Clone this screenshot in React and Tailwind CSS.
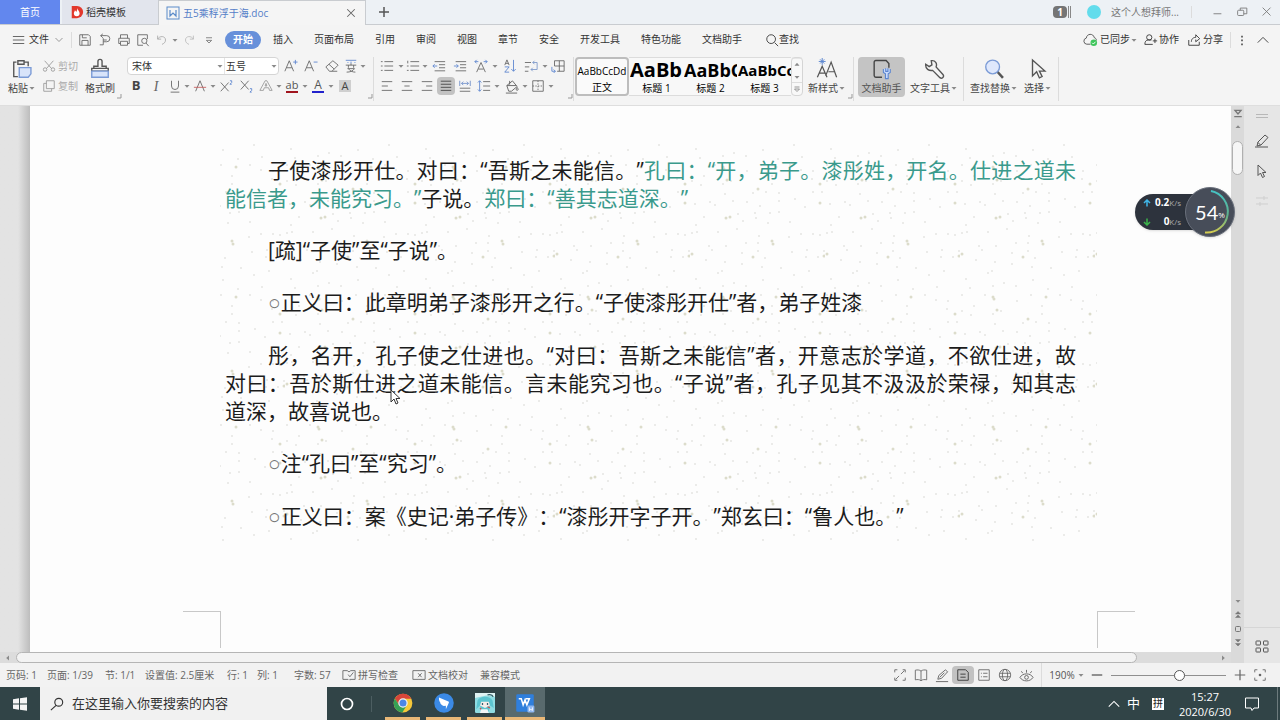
import React from "react";

const svgProps = { fill: "none", stroke: "currentColor", strokeWidth: 1 };

const Icon = ({ size = 16, className = "", children }) => (
  <svg
    width={size}
    height={size}
    viewBox="0 0 16 16"
    className={`shrink-0 ${className}`}
    aria-hidden="true"
    {...svgProps}
  >
    {children}
  </svg>
);

const Caret = () => (
  <svg width="8" height="8" viewBox="0 0 8 8" className="shrink-0" aria-hidden="true">
    <path d="M1.5 3h5L4 5.8z" fill="#8a8a8a" />
  </svg>
);

const Corner = () => (
  <svg width="6" height="6" viewBox="0 0 6 6" className="shrink-0 self-end" aria-hidden="true">
    <path d="M5 1v4H1" fill="none" stroke="#999" />
  </svg>
);

const Divider = ({ className = "h-4" }) => <span className={`w-px shrink-0 bg-[#dcdcdc] ${className}`} />;

const Tool = ({ label, width = "w-5", caret, active, children }) => (
  <button aria-label={label} className="flex h-[18px] items-center text-[#666]">
    <span
      className={`flex h-[18px] items-center justify-center ${width} ${active ? "rounded-sm bg-[#c2c2c2]" : ""}`}
    >
      {children}
    </span>
    {caret && <Caret />}
  </button>
);

const BigTool = ({ label, caret, width, active, children }) => (
  <button
    className={`flex h-10 flex-col items-center justify-between rounded-sm pt-px pb-px ${width} ${
      active ? "bg-[#c4c4c4] text-[#555]" : ""
    }`}
  >
    {children}
    <span className="flex items-center whitespace-nowrap leading-4">
      {label}
      {caret && <Caret />}
    </span>
  </button>
);

const TitleBar = () => (
  <header className="flex h-[25px] border-b border-[#c9ccd0] bg-[#edf1f5]">
    <button className="h-6 w-[60px] bg-[#6287ee] text-white">首页</button>
    <button className="ml-0.5 flex h-6 w-24 items-center bg-[#e2e5ed] pl-2 text-[#333]">
      <Icon size={14} className="mr-0.5">
        <path d="M2 1h6a7 7 0 0 1 0 14H2z" fill="#e2382c" stroke="none" />
        <path d="M8 3c0 2 3 3.500 3 6.500a3.300 3.300 0 0 1-6.600 0C4.400 8 5.500 7.500 5.600 6c1 .6 1.300 1.400 1.300 2C8 7 8.400 5 8 3z" fill="#fff" stroke="none" />
      </Icon>
      稻壳模板
    </button>
    <div className="flex h-[25px] w-[208px] items-center border-x border-t border-[#c9ccd0] bg-[#f5f5f5] pr-2 pl-1.5 text-[#5580c8]">
      <Icon size={16} className="mr-0.5 text-[#5b8bc9]">
        <rect x="2" y="2" width="12" height="12" />
        <path d="M5 5v6l3-3 3 3V5" strokeWidth="1.200" />
      </Icon>
      <span className="flex-1 whitespace-nowrap">五5乘稃浮于海.doc</span>
      <button aria-label="关闭标签" className="text-[#666]">
        <Icon size={12}>
          <path d="M3 3l10 10M13 3L3 13" strokeWidth="1.400" />
        </Icon>
      </button>
    </div>
    <button aria-label="新建" className="ml-2.5 text-[#555]">
      <Icon size={16}>
        <path d="M8 3v10M3 8h10" strokeWidth="1.500" />
      </Icon>
    </button>
    <div className="ml-auto flex items-center pr-1.5 text-[#777]">
      <span className="flex h-3 w-3.5 items-center justify-center rounded-sm bg-[#757575] font-bold text-white">1</span>
      <span className="ml-px h-3 w-[3px] border-x border-[#888]" />
      <span className="ml-4 h-3.5 w-3.5 rounded-full bg-[#62dcec]" />
      <span className="ml-2.5 w-[80px] whitespace-nowrap">这个人想拜师...</span>
      <Divider className="h-3" />
      <button aria-label="最小化" className="ml-[18px]">
        <Icon size={14}>
          <path d="M4 10h9" />
        </Icon>
      </button>
      <button aria-label="还原" className="ml-[11px]">
        <Icon size={14}>
          <rect x="3" y="6" width="7" height="6" rx="1" />
          <path d="M6 6V3.500h7.500V10H10" />
        </Icon>
      </button>
      <button aria-label="关闭" className="ml-[11px]">
        <Icon size={14}>
          <path d="M3 3l9 9M12 3l-9 9" />
        </Icon>
      </button>
    </div>
  </header>
);

const menus = ["插入", "页面布局", "引用", "审阅", "视图", "章节", "安全", "开发工具", "特色功能", "文档助手"];

const MenuBar = () => (
  <nav className="flex h-[29px] items-center pr-2.5 pl-3 text-[#333]">
    <button className="flex w-[59px] items-center">
      <Icon size={14} className="mr-[3px]">
        <path d="M1 4h13M1 8h13M1 12h13" stroke="#555" />
      </Icon>
      文件
      <Icon size={8} className="ml-1.5 text-[#999]">
        <path d="M1 4l7 7 7-7" strokeWidth="2" />
      </Icon>
    </button>
    <Divider />
    <div className="flex w-[153px] items-center pl-[3px] text-[#555]">
      <Tool label="保存">
        <Icon size={14}>
          <path d="M2 14V2h10l2 2v10zM4.500 14V8.500h7V14M5 2v3.500h5" />
        </Icon>
      </Tool>
      <Tool label="输出">
        <Icon size={14}>
          <path d="M3 3h7a3.500 3.500 0 0 1 0 7H6M5.500 1L3 3l2.500 2.500M6 6v7.500H2M6 8h4" />
        </Icon>
      </Tool>
      <Tool label="打印" width="w-[18px]">
        <Icon size={14}>
          <path d="M4 6V2h8v4M4 12H2V6h12v6h-2M4 9.500h8V14H4z" />
        </Icon>
      </Tool>
      <Tool label="打印预览">
        <Icon size={14}>
          <path d="M8 14H2V2h11v5" />
          <circle cx="9.500" cy="9" r="3" />
          <path d="M11.500 11.500L14.500 15" />
        </Icon>
      </Tool>
      <Tool label="撤销" width="w-[18px]" caret>
        <Icon size={14} className="text-[#aaa]">
          <path d="M3 3v4h4M3 7c2-4 9-4 9 1 0 3-2 4-4 5" />
        </Icon>
      </Tool>
      <Tool label="恢复">
        <Icon size={14} className="text-[#bbb]">
          <path d="M13 3v4H9M13 7C11 3 4 3 4 8c0 3 2 4 4 5" />
        </Icon>
      </Tool>
      <Tool label="自定义">
        <Icon size={12}>
          <path d="M4 5h8M4.500 8.500h7L8 12z" />
        </Icon>
      </Tool>
    </div>
    <button className="h-[18px] w-9 rounded-full bg-[#6790da] font-bold text-white">开始</button>
    <div className="ml-3 flex items-center gap-[21px] whitespace-nowrap">
      {menus.map((m) => (
        <button key={m}>{m}</button>
      ))}
      <button className="ml-0.5 flex items-center">
        <Icon size={14}>
          <circle cx="7" cy="7" r="5" />
          <path d="M11 11l4 4" />
        </Icon>
        查找
      </button>
    </div>
    <div className="ml-auto flex items-center whitespace-nowrap">
      <button className="flex items-center">
        <Icon size={15} className="mr-0.5 text-[#555]">
          <path d="M8 13H4a3.300 3.300 0 0 1-.5-6.500C4 1.500 11 1 12 6c1.500.5 2.300 1.500 2.300 3" />
          <circle cx="11.500" cy="11.500" r="3.500" fill="#3fc55c" stroke="none" />
          <path d="M9.800 11.500l1.300 1.300 2.200-2.400" stroke="#fff" />
        </Icon>
        已同步
        <Caret />
      </button>
      <button className="ml-1.5 flex items-center">
        <Icon size={14} className="mr-px">
          <circle cx="6" cy="5" r="3" />
          <path d="M8.500 8H5c-3 0-4 2-4 5h9M10 9h5M12.500 6.500v5" />
        </Icon>
        协作
      </button>
      <button className="ml-2 flex items-center">
        <Icon size={14} className="mr-0.5">
          <path d="M2 8v6h12v-4M5 10c0-4 3-5 5-5V2l4.500 4.500L10 10V7.500" />
        </Icon>
        分享
      </button>
      <Divider className="ml-[7px] h-4" />
      <button aria-label="更多" className="ml-1">
        <Icon size={14}>
          <path d="M8 3v2M8 7.500v2M8 12v2" strokeWidth="1.600" />
        </Icon>
      </button>
      <button aria-label="收起功能区" className="ml-[7px]">
        <Icon size={14}>
          <path d="M2 11l6-6 6 6" />
        </Icon>
      </button>
    </div>
  </nav>
);

const ClipboardGroup = () => (
  <div className="flex">
    <BigTool label="粘贴" caret width="w-7">
      <Icon size={22} className="text-[#555]">
        <path d="M4 3H2v10.500h3M10 3h2.500v3M5 2h4.500v2.500H5z" />
        <path d="M6 7h8.500v4.500l-2 2.500H6z" fill="#d8e4fa" stroke="#7b9bd6" />
      </Icon>
    </BigTool>
    <div className="ml-1.5 flex flex-col gap-0.5 text-[#aaa]">
      <button className="flex h-[18px] items-center">
        <Icon size={14} className="mr-0.5 text-[#999]">
          <path d="M3 2l8 9M13 2L5 11" />
          <circle cx="3.500" cy="12" r="2" />
          <circle cx="12.500" cy="12" r="2" />
        </Icon>
        剪切
      </button>
      <button className="flex h-[18px] items-center">
        <Icon size={14} className="mr-0.5 text-[#999]">
          <path d="M5 2h9v9H5zM5 5H2v9h9v-3" />
        </Icon>
        复制
      </button>
    </div>
    <BigTool label="格式刷" width="ml-1.5 w-8">
      <Icon size={22} className="text-[#555]">
        <path d="M2 7.500h12v2H2zM3.500 7V6h3V2.500a1.500 1.500 0 0 1 3 0V6h3v1.500" />
        <path d="M2 9.500h12V14H2z" fill="#d8e4fa" stroke="#7b9bd6" />
      </Icon>
    </BigTool>
    <Corner />
  </div>
);

const FontGroup = () => (
  <div className="ml-[5px] flex">
    <div className="flex flex-col gap-0.5">
      <div className="flex">
        <div className="flex h-[18px] w-[152px] rounded-sm border border-[#d5d5d5] bg-white">
          <div className="relative flex w-24 items-center">
            <select aria-label="字体" className="w-full appearance-none pl-1 text-[#333] outline-none">
              <option>宋体</option>
            </select>
            <span className="pointer-events-none absolute right-0">
              <Caret />
            </span>
          </div>
          <div className="relative flex flex-1 items-center border-l border-[#e5e5e5]">
            <select aria-label="字号" className="w-full appearance-none pl-px text-[#333] outline-none">
              <option>五号</option>
            </select>
            <span className="pointer-events-none absolute right-0">
              <Caret />
            </span>
          </div>
        </div>
        <div className="flex pl-0.5">
          <Tool label="增大字号">
            <Icon size={14}>
              <path d="M1 14L6 2l5 12M3 10h6" />
              <path d="M13 1v5M10.500 3.500h5" stroke="#5b85cf" />
            </Icon>
          </Tool>
          <Tool label="减小字号">
            <Icon size={14}>
              <path d="M1 14L6 2l5 12M3 10h6" />
              <path d="M11 3.500h4.500" stroke="#5b85cf" />
            </Icon>
          </Tool>
          <Tool label="清除格式" width="w-[22px]">
            <Icon size={14}>
              <path d="M1 9l8-7 6 5-7 7H5zM4.500 6l6 5.500M8 14h6" />
            </Icon>
          </Tool>
          <Tool label="拼音指南" width="w-4" caret>
            <Icon size={14}>
              <path d="M2 1.500h12M4 4h1M8 3v2M12 4h1" stroke="#5b85cf" />
              <path d="M2 7h12M8 5v2M5 7v3M11 7v3M4 11h8c-2 3-5 4-9 4M5 11c2 3 5 4 8 4" />
            </Icon>
          </Tool>
        </div>
      </div>
      <div className="flex">
        <Tool label="加粗" width="w-[18px]">
          <span className="text-[13px] font-bold text-[#444]">B</span>
        </Tool>
        <Tool label="倾斜" width="w-[22px]">
          <span className="font-['Liberation_Serif',serif] text-[14px] italic">I</span>
        </Tool>
        <Tool label="下划线" width="w-4" caret>
          <Icon size={14}>
            <path d="M4 2v6a4 4 0 0 0 8 0V2M3 15h10" />
          </Icon>
        </Tool>
        <Tool label="删除线" width="w-[18px]" caret>
          <Icon size={14}>
            <path d="M3 14L8 2l5 12" />
            <path d="M1 9.500h14" stroke="#c76060" />
          </Icon>
        </Tool>
        <Tool label="上标" width="w-[18px]">
          <Icon size={14}>
            <path d="M2 4l9 10M11 4L2 14" />
            <path d="M12.500 2h2v2l-2 2h2" stroke="#5b85cf" />
          </Icon>
        </Tool>
        <Tool label="下标" width="w-[22px]">
          <Icon size={14}>
            <path d="M2 2l9 10M11 2L2 12" />
            <path d="M12.500 11h2v2l-2 2h2" stroke="#5b85cf" />
          </Icon>
        </Tool>
        <Tool label="文字效果" width="w-[18px]" caret>
          <Icon size={14} className="text-[#999]">
            <path d="M1 13L7 2h2l6 11h-3l-1-3H6l-1 3zM7 8l1-3 1 3z" />
          </Icon>
        </Tool>
        <Tool label="突出显示" width="w-[18px]" caret>
          <span className="border-b-2 border-[#a0141e] text-[11px] leading-3 text-[#555]">ab</span>
        </Tool>
        <Tool label="字体颜色" width="w-[18px]" caret>
          <span className="w-3 border-b-2 border-[#2222cc] text-center text-[12px] leading-3 text-[#555]">A</span>
        </Tool>
        <Tool label="字符底纹">
          <span className="h-3 w-3 bg-[#cfcfcf] text-center text-[11px] leading-3 text-[#444]">A</span>
        </Tool>
      </div>
    </div>
    <Corner />
  </div>
);

const ParagraphGroup = () => (
  <div className="ml-[3px] flex">
    <div className="flex flex-col gap-0.5">
      <div className="flex">
        <Tool label="项目符号" caret>
          <Icon size={14}>
            <path d="M5 3h10M5 8h10M5 13h10M1 3h2M1 8h2M1 13h2" />
          </Icon>
        </Tool>
        <Tool label="编号" width="w-4" caret>
          <Icon size={14}>
            <path d="M5 3h10M5 8h10M5 13h10M2 2v3M1 8h2M1 13h2" />
          </Icon>
        </Tool>
        <Tool label="减少缩进量">
          <Icon size={14}>
            <path d="M3 3h12M8 6.500h7M8 10h7M3 13.500h12" />
            <path d="M6 8H1M3 6L1 8l2 2" stroke="#5b85cf" />
          </Icon>
        </Tool>
        <Tool label="增加缩进量" width="w-[22px]">
          <Icon size={14}>
            <path d="M3 3h12M8 6.500h7M8 10h7M3 13.500h12" />
            <path d="M1 8h5M4 6l2 2-2 2" stroke="#5b85cf" />
          </Icon>
        </Tool>
        <Tool label="中文版式" caret>
          <Icon size={14}>
            <path d="M3 15L8 4l5 11M5 11.500h6" />
            <path d="M5 3H1M3 1L1 3l2 2M11 3h4M13 1l2 2-2 2" stroke="#5b85cf" />
          </Icon>
        </Tool>
        <Tool label="排序" width="w-[22px]">
          <Icon size={14}>
            <path d="M2 7l2.500-6L7 7M3 5h3" />
            <path d="M2 9h5l-5 6h5M12 1v13M9.500 11.500L12 14l2.500-2.500" stroke="#5b85cf" />
          </Icon>
        </Tool>
        <Tool label="显示段落标记" caret>
          <Icon size={14}>
            <path d="M1 4h7M1 9h5M1 14h4" />
            <path d="M10 4h5v8H8M10 10l-2 2 2 2M12 2l-2 2 2 2" stroke="#7d98c9" />
          </Icon>
        </Tool>
        <Tool label="插入表格" width="w-[18px]">
          <Icon size={14}>
            <path d="M4 2h11v12H7M4 2v6M9.500 2v12M4 8h11" />
            <path d="M1 9v5h4M3 12l2 2-2 2" stroke="#5b85cf" />
          </Icon>
        </Tool>
      </div>
      <div className="flex">
        <Tool label="左对齐">
          <Icon size={14}>
            <path d="M2 3h12M2 8h7M2 13h12" />
          </Icon>
        </Tool>
        <Tool label="居中">
          <Icon size={14}>
            <path d="M2 3h12M5 8h6M2 13h12" />
          </Icon>
        </Tool>
        <Tool label="右对齐">
          <Icon size={14}>
            <path d="M2 3h12M7 8h7M2 13h12" />
          </Icon>
        </Tool>
        <Tool label="两端对齐" width="w-[18px]" active>
          <Icon size={14} className="text-[#444]">
            <path d="M2 2.500h12M2 6h12M2 9.500h12M2 13h12" />
          </Icon>
        </Tool>
        <Tool label="分散对齐">
          <Icon size={14}>
            <path d="M2 10.500h12M2 14h12" />
            <path d="M2 2v6M14 2v6M4 5h8M6 3L4 5l2 2M10 3l2 2-2 2" stroke="#6f8fc9" />
          </Icon>
        </Tool>
        <Tool label="行距" width="w-[18px]" caret>
          <Icon size={14}>
            <path d="M7 3h8M7 8h8M7 13h8" />
            <path d="M3 2v12M1 4l2-2 2 2M1 12l2 2 2-2" stroke="#5b85cf" />
          </Icon>
        </Tool>
        <Tool label="底纹颜色" caret>
          <Icon size={15}>
            <path d="M3 7l6-5 5 6-6 5H5zM3 7h10M6 2v4M14 9c1.500 2 1.500 3 0 3s-1-1 0-3M2 15h12" />
          </Icon>
        </Tool>
        <Tool label="边框" width="w-[18px]" caret>
          <Icon size={14}>
            <path d="M2 2h12v12H2z" />
            <path d="M8 2v12M2 8h12" strokeDasharray="1.500 1.500" />
          </Icon>
        </Tool>
      </div>
    </div>
    <Corner />
  </div>
);

const styles = [
  { name: "标题 1", sample: "AaBb", size: "text-[20px]" },
  { name: "标题 2", sample: "AaBbC", size: "text-[18px]" },
  { name: "标题 3", sample: "AaBbCc", size: "text-[15px]" },
];

const StyleGallery = () => (
  <div className="flex h-[39px] text-black">
    <button className="flex w-[54px] flex-col items-center overflow-hidden rounded-sm border-2 border-[#bdbdbd] bg-[#fafafa]">
      <span className="h-[22px] text-[10px] leading-6">AaBbCcDd</span>
      <span className="leading-3">正文</span>
    </button>
    <div className="flex border-y border-[#dcdcdc] bg-[#f8f8f8]">
      {styles.map((s) => (
        <button key={s.name} className="ml-px flex w-[53px] flex-col items-center overflow-hidden">
          <span className={`h-6 w-full overflow-hidden text-left font-bold leading-6 whitespace-nowrap ${s.size}`}>
            {s.sample}
          </span>
          <span className="leading-3">{s.name}</span>
        </button>
      ))}
    </div>
    <div className="flex w-3 flex-col divide-y divide-[#ddd] rounded-sm border border-[#d5d5d5] bg-[#f8f8f8]">
      <button aria-label="上一行" className="flex flex-1 rotate-180 items-center justify-center">
        <Caret />
      </button>
      <button aria-label="下一行" className="flex flex-1 items-center justify-center">
        <Caret />
      </button>
      <button aria-label="更多样式" className="flex flex-1 items-center justify-center">
        <Icon size={8} className="text-[#777]">
          <path d="M3 4h10M3 8h10l-5 5z" strokeWidth="1.500" />
        </Icon>
      </button>
    </div>
  </div>
);

const Ribbon = () => (
  <div className="flex h-[52px] border-b border-[#dedede] pt-[3px] pb-1.5 pl-2 text-[#444]">
    <ClipboardGroup />
    <FontGroup />
    <Divider className="h-11" />
    <ParagraphGroup />
    <Divider className="mr-px h-11" />
    <StyleGallery />
    <div className="ml-1 flex">
      <BigTool label="新样式" caret width="w-10">
        <Icon size={22} className="text-[#555]">
          <path d="M1 14l3.500-8L8 14M2.500 11h4M7 13l4-10 4 11M9 10h5" strokeWidth="0.900" />
          <path d="M4.500 0v5M2 2.500h5M3 1l3 3M6 1L3 4" stroke="#5b85cf" strokeWidth="0.700" />
        </Icon>
      </BigTool>
      <Corner />
    </div>
    <Divider className="h-11" />
    <BigTool label="文档助手" active width="ml-1 w-[47px]">
      <Icon size={22} className="text-[#444]">
        <path d="M8 14H3.500a1.200 1.200 0 0 1-1.200-1.200V3a1.200 1.200 0 0 1 1.200-1.200H11L13 4v3" />
        <path d="M9 8v2.500l1.500 1V15h2v-3.500l1.500-1V8M10.700 7.500v2.200h1.600V7.500" fill="#c9dafb" stroke="#5b85cf" strokeWidth="0.800" />
      </Icon>
    </BigTool>
    <BigTool label="文字工具" caret width="ml-1 w-[50px]">
      <Icon size={22} className="text-[#555]">
        <path d="M2 4.500l2.500 1.800L6.500 5 6 2c3-.5 4.500 2 3.500 4.500l5 5.500a1.600 1.600 0 0 1-2.200 2.300L7 9C4.500 9.500 1.500 8 2 4.500z" />
      </Icon>
    </BigTool>
    <Divider className="ml-1 h-11" />
    <BigTool label="查找替换" caret width="ml-1 w-[52px]">
      <Icon size={22} className="text-[#555]">
        <path d="M10.500 10l4 4.500" strokeWidth="1.800" />
        <circle cx="7" cy="6.500" r="5" fill="#dfe8fc" stroke="#7b9bd6" />
      </Icon>
    </BigTool>
    <BigTool label="选择" caret width="ml-0.5 w-8">
      <Icon size={22} className="text-[#555]">
        <path d="M4 1.500v11.500l3-3 2 4.500 2-1-2-4h4z" />
      </Icon>
    </BigTool>
    <Divider className="ml-1 h-11" />
  </div>
);

/* one tile of the rice-paper speckle, [x, y] */
const specks = [
  [65, 3], [80, 3], [89, 2], [100, 12], [78, 13], [66, 8], [53, 11], [48, 4], [6, 15], [14, 7], [2, 23], [7, 22],
  [28, 22], [47, 19], [69, 26], [68, 33], [56, 33], [36, 36], [22, 40], [19, 36], [16, 50], [35, 52], [52, 43],
  [52, 54], [68, 41], [75, 48], [72, 57], [91, 58], [102, 42], [99, 27], [111, 24], [123, 24], [130, 25], [117, 40],
  [116, 47], [128, 47], [134, 41], [119, 61], [104, 65], [112, 77], [88, 79], [73, 70], [56, 76], [44, 73], [33, 76],
  [32, 61], [28, 63], [10, 78], [6, 69], [2, 85], [25, 85], [57, 91], [71, 85], [100, 85], [111, 90], [122, 99],
  [123, 91], [82, 96], [82, 104], [76, 112], [63, 113], [41, 101], [33, 104], [14, 96], [11, 105], [2, 101],
  [35, 114], [43, 121], [57, 122], [20, 122], [25, 125], [5, 124], [89, 113], [89, 121], [105, 119], [123, 112],
  [132, 112], [115, 127], [70, 126],
];
const darkSpecks = [
  [36, 8], [40, 7], [82, 31], [83, 34], [63, 47], [2, 44], [134, 46], [33, 87], [34, 89], [86, 87], [68, 109],
  [130, 104], [37, 100], [130, 123],
];

const Speckle = () => (
  <svg className="absolute inset-0 h-full w-full" aria-hidden="true">
    <defs>
      <pattern id="speckle" width="135" height="130" patternUnits="userSpaceOnUse" patternTransform="translate(65 66)">
        {specks.map(([x, y]) => (
          <circle key={`${x}-${y}`} cx={x} cy={y} r="1" fill="#e6e6e3" />
        ))}
        {darkSpecks.map(([x, y]) => (
          <circle key={`${x}-${y}`} cx={x} cy={y} r="1.5" fill="#dcdccb" />
        ))}
      </pattern>
    </defs>
    <rect width="100%" height="100%" fill="url(#speckle)" />
  </svg>
);

const Note = ({ children }) => <span className="text-[#3a9a8c]">{children}</span>;
const Ring = () => <span className="font-['Liberation_Sans',sans-serif] text-[#777]">○</span>;

const Page = () => (
  <main className="flex flex-1 flex-col bg-[#fdfdfd] pt-[38px] pl-[190px]">
    <article className="relative max-w-[877px] pt-3 pb-2.5 pl-[5px] text-[21px] leading-7 text-[#1c1c1c] [text-spacing-trim:space-all]">
      <Speckle />
      <div className="relative flex max-w-[851px] flex-col gap-6 text-justify indent-[43px]">
        <p>
          子使漆彤开仕。对曰：“吾斯之未能信。”
          <Note>孔曰：“开，弟子。漆彤姓，开名。仕进之道未能信者，未能究习。”</Note>
          子说。<Note>郑曰：“善其志道深。”</Note>
        </p>
        <p>[疏]“子使”至“子说”。</p>
        <p>
          <Ring />
          正义曰：此章明弟子漆彤开之行。“子使漆彤开仕”者，弟子姓漆
        </p>
        <p>
          彤，名开，孔子使之仕进也。“对曰：吾斯之未能信”者，开意志於学道，不欲仕进，故对曰：吾於斯仕进之道未能信。言未能究习也。“子说”者，孔子见其不汲汲於荣禄，知其志道深，故喜说也。
        </p>
        <p>
          <Ring />
          注“孔曰”至“究习”。
        </p>
        <p>
          <Ring />
          正义曰：案《史记·弟子传》：“漆彤开字子开。”郑玄曰：“鲁人也。”
        </p>
      </div>
    </article>
    {/* page margin marks */}
    <div className="mt-auto mb-1 -ml-[37px] flex h-[37px]">
      <span className="w-[38px] border-t border-r border-[#c8c8c8]" />
      <span className="w-[876px]" />
      <span className="w-[38px] border-t border-l border-[#c8c8c8]" />
    </div>
  </main>
);

const Workspace = () => (
  <div className="flex flex-1">
    <div className="flex min-w-0 flex-1 flex-col">
      <div className="flex flex-1">
        <div className="w-[30px] bg-linear-to-r from-[#e3e3e3] from-60% to-[#bdbdbd]" />
        <Page />
      </div>
      <div className="flex h-[11px] items-center bg-[#dcdcdc]">
        <span className="flex w-4 rotate-90 justify-center">
          <Caret />
        </span>
        <div className="h-[11px] flex-1 rounded-full border border-[#b5b5b5] bg-[#f3f3f3]" />
        <span className="flex w-[94px] justify-end pr-1">
          <span className="-rotate-90">
            <Caret />
          </span>
        </span>
      </div>
    </div>
    <div className="flex w-[13px] flex-col items-center bg-[#dadada] text-[#777]">
      <Icon size={10} className="mt-[3px]">
        <path d="M3 2h10l-5 6zM2 12h12" strokeWidth="2" />
      </Icon>
      <span className="mt-1 rotate-180">
        <Caret />
      </span>
      <div className="mt-2.5 h-[34px] w-[11px] rounded-full border border-[#b0b0b0] bg-[#f6f6f6]" />
      <div className="mt-auto mb-2.5 flex flex-col items-center gap-1.5 pb-1.5">
        <Caret />
        <Icon size={8}>
          <path d="M8 1l5 5H3zM8 8l5 5H3z" fill="currentColor" />
        </Icon>
        <Icon size={8}>
          <rect x="3" y="3" width="10" height="10" rx="2" strokeWidth="2" />
        </Icon>
        <Icon size={8}>
          <path d="M8 6l5-5H3zM8 14l5-5H3z" fill="currentColor" />
        </Icon>
      </div>
    </div>
    <aside className="flex w-9 flex-col items-center bg-[#e6e6e6] text-[#555]">
      <span className="mt-2 h-1 w-3 border-y border-[#b8b8b8]" />
      <button aria-label="编辑" className="mt-[15px]">
        <Icon size={16}>
          <path d="M3 13l1-4 7-7 3 2.500L7 12zM4 9.500L6.500 12M1 14h13" />
        </Icon>
      </button>
      <button aria-label="选择对象" className="mt-3.5">
        <Icon size={16}>
          <path d="M4 2v10.500l2.500-2.500 2 4.500 2-1-2-4H12z" />
        </Icon>
      </button>
      <button aria-label="设置" className="mt-3.5 text-[#cfcfcf]">
        <Icon size={16}>
          <path d="M2 5h12M2 11h12M10 3v4M6 9v4" />
        </Icon>
      </button>
      <button aria-label="全部工具" className="mt-auto flex h-9 w-full items-center justify-center border-t border-[#d6d6d6]">
        <Icon size={16}>
          <rect x="2" y="3" width="4.500" height="4" rx="0.500" />
          <rect x="9.500" y="3" width="4.500" height="4" rx="0.500" />
          <rect x="2" y="10" width="4.500" height="4" rx="0.500" />
          <rect x="9.500" y="10" width="4.500" height="4" rx="0.500" />
        </Icon>
      </button>
    </aside>
  </div>
);

const StatusBar = () => (
  <footer className="flex h-6 items-center bg-[#f2f2f2] pr-2.5 pl-1.5 whitespace-nowrap text-[#666]">
    <span className="w-[41px]">页码: 1</span>
    <span className="w-[58px]">页面: 1/39</span>
    <span className="w-10">节: 1/1</span>
    <span className="w-[82px]">设置值: 2.5厘米</span>
    <span className="w-[30px]">行: 1</span>
    <span className="w-[37px]">列: 1</span>
    <span className="w-12">字数: 57</span>
    <button className="flex w-[70px] items-center">
      <Icon size={14} className="mr-0.5">
        <path d="M7 13H1V3h5l2 1.500L10 3h5v10H9M7 7.500l2 2.500 4-5M8 13l1 1" />
      </Icon>
      拼写检查
    </button>
    <button className="flex w-[68px] items-center">
      <Icon size={14} className="mr-0.5">
        <path d="M7 13H1V3h14v10H7zM7 6l4 4.500M11 6l-4 4.500" />
      </Icon>
      文档校对
    </button>
    <span>兼容模式</span>
    <div className="ml-auto flex items-center text-[#555]">
      <Tool label="全屏">
        <Icon size={14}>
          <path d="M2 5V2h3M11 2h3v3M14 11v3h-3M5 14H2v-3M9 7l4-4M7 9l-4 4" />
        </Icon>
      </Tool>
      <Tool label="阅读版式" width="w-[22px]">
        <Icon size={14}>
          <path d="M8 3.500C6 2 4 2 1.500 2.500v11C4 13 6 13 8 14.500c2-1.500 4-1.500 6.500-1v-11C12 2 10 2 8 3.500zM8 3.500v11" />
        </Icon>
      </Tool>
      <Tool label="写作模式">
        <Icon size={15}>
          <path d="M3 12l1-4 7-6 2.500 2L7 11zM1 14.500h13M5 10l5-5" />
        </Icon>
      </Tool>
      <Tool label="页面视图" width="w-[22px]" active>
        <Icon size={14} className="text-[#333]">
          <path d="M2 2h9l3 3v9H2zM5 7h6M5 10.500h6" />
        </Icon>
      </Tool>
      <Tool label="大纲">
        <Icon size={14}>
          <path d="M2 2h12v12H2zM4.500 6h1M7 6h5M4.500 10h1M7 10h5" />
        </Icon>
      </Tool>
      <Tool label="Web 版式" width="w-[22px]">
        <Icon size={14}>
          <circle cx="8" cy="8" r="6.500" />
          <ellipse cx="8" cy="8" rx="3" ry="6.500" />
          <path d="M2 6h12M2 10h12" />
        </Icon>
      </Tool>
      <Tool label="护眼模式">
        <Icon size={15}>
          <path d="M1 10c3-5 11-5 14 0-3 5-11 5-14 0zM8 5V2M4 5.500L2.500 3.500M12 5.500l1.500-2" />
          <circle cx="8" cy="10" r="2" />
        </Icon>
      </Tool>
      <Divider className="mx-[5px] h-6" />
      <button className="flex w-10 items-center justify-center gap-0.5">
        190%
        <Caret />
      </button>
      <Tool label="缩小">
        <Icon size={14}>
          <path d="M2 8h12" strokeWidth="1.600" />
        </Icon>
      </Tool>
      <input
        type="range"
        aria-label="缩放"
        defaultValue="61"
        className="mx-1 h-3 w-[115px] appearance-none bg-transparent [&::-webkit-slider-runnable-track]:h-px [&::-webkit-slider-runnable-track]:bg-[#8f8f8f] [&::-webkit-slider-thumb]:-mt-[5px] [&::-webkit-slider-thumb]:h-[11px] [&::-webkit-slider-thumb]:w-[11px] [&::-webkit-slider-thumb]:appearance-none [&::-webkit-slider-thumb]:rounded-full [&::-webkit-slider-thumb]:border [&::-webkit-slider-thumb]:border-[#555] [&::-webkit-slider-thumb]:bg-white"
      />
      <Tool label="放大">
        <Icon size={14}>
          <path d="M2 8h12M8 2v12" strokeWidth="1.400" />
        </Icon>
      </Tool>
      <Tool label="最佳显示比例">
        <Icon size={14}>
          <path d="M2 5V2h3M11 2h3v3M14 11v3h-3M5 14H2v-3" />
          <circle cx="8" cy="8" r="1.500" fill="currentColor" stroke="none" />
        </Icon>
      </Tool>
    </div>
  </footer>
);

const TaskApp = ({ label, current, children }) => (
  <button
    aria-label={label}
    className={`flex h-full flex-col items-center justify-between pt-1.5 ${current ? "w-10 bg-[#586a6d]" : "w-[41px] px-[3px]"}`}
  >
    {children}
    <span className="h-[3px] w-full bg-[#e9b877]" />
  </button>
);

const TaskBar = () => (
  <div className="flex h-[33px] items-center bg-[#314447] text-white">
    <button aria-label="开始菜单" className="flex w-10 justify-center">
      <Icon size={16}>
        <path d="M1 3.200l6-.9v5.200H1zM8 2.200l7-1v6.300H8zM1 8.500h6v5.200l-6-.9zM8 8.500h7v6.300l-7-1z" fill="#f4f4f4" stroke="none" />
      </Icon>
    </button>
    <label className="flex h-[33px] w-[287px] items-center bg-[#f1f1f1] pl-2.5 text-[#333]">
      <Icon size={14} className="mr-2">
        <circle cx="10" cy="6" r="4.500" strokeWidth="1.300" />
        <path d="M7 9.500L1 15" strokeWidth="1.300" />
      </Icon>
      <input
        aria-label="搜索"
        placeholder="在这里输入你要搜索的内容"
        className="w-full bg-transparent text-[13px] outline-none placeholder:text-[#333]"
      />
    </label>
    <button aria-label="Cortana" className="flex w-10 justify-center">
      <Icon size={16}>
        <circle cx="8" cy="8" r="5.500" strokeWidth="1.700" />
      </Icon>
    </button>
    <span className="mr-2.5 ml-1 h-4 w-px bg-[#4c5e61]" />
    <TaskApp label="Chrome">
      <Icon size={20}>
        <circle cx="8" cy="8" r="7.500" fill="#f5c83a" stroke="none" />
        <path d="M1.500 4.300A7.500 7.500 0 0 1 14.600 4.500H8L4.800 9.500z" fill="#d8453a" stroke="none" />
        <path d="M1.500 4.300A7.500 7.500 0 0 0 7.500 15.500L11 9.800 4.800 9.500z" fill="#36a156" stroke="none" />
        <circle cx="8" cy="8" r="3.300" fill="#4a86e8" stroke="#f2f2f2" />
      </Icon>
    </TaskApp>
    <TaskApp label="钉钉">
      <Icon size={20}>
        <circle cx="8" cy="8" r="7.800" fill="#3b8ae6" stroke="none" />
        <path d="M4 3.500l7.500 3.300c.6.300.5.900.2 1.400L9.500 13l0-2.800-1.700.2C5.800 9.600 5 8.500 5 7.600 4.200 6.500 3.800 5 4 3.500z" fill="#fff" stroke="none" />
      </Icon>
    </TaskApp>
    <TaskApp label="桌面宠物">
      <Icon size={20}>
        <rect width="16" height="16" rx="1" fill="#8fdce2" stroke="none" />
        <path d="M0 0h16v3L9 2 0 4z" fill="#dff3f3" stroke="none" />
        <path d="M2 6c2-4 10-4 12 0l1 6-3-2-1 5H6l-2-5-3 3z" fill="#5cc4cf" stroke="none" />
        <path d="M5 7h6l1 3-4 2-4-2z" fill="#f7ece9" stroke="none" />
        <path d="M6 8v1.500M10 8v1.500" stroke="#34606e" />
        <path d="M5 13h5l1 3H4z" fill="#f3f6f6" stroke="none" />
        <path d="M10 1.500c2-.5 4 0 4.500 1.500" stroke="#2b5a63" />
        <path d="M10 11l2 1M4 12l1 1" stroke="#c75050" />
      </Icon>
    </TaskApp>
    <TaskApp label="WPS 文字" current>
      <Icon size={20}>
        <rect x="1" y="1" width="14" height="14" rx="1" fill="#2f7fdc" stroke="none" />
        <path d="M3 4.500h2l1.500 5L8 5.500l1.500 4 2-5H8.500" stroke="#fff" strokeWidth="1.200" />
        <rect x="10" y="10" width="5.500" height="5.500" rx="1" fill="#8fb7f0" stroke="none" />
        <path d="M11.500 11.500v2.500l1.200-1 1.200 1v-2.500" stroke="#fff" strokeWidth="0.700" />
      </Icon>
    </TaskApp>
    <div className="ml-auto flex h-full items-center">
      <button aria-label="显示隐藏的图标" className="mr-1.5">
        <Icon size={14}>
          <path d="M2 11l6-6 6 6" strokeWidth="1.200" />
        </Icon>
      </button>
      <span className="w-[25px] text-[13px]">中</span>
      <span className="flex h-3 w-3 items-center justify-center bg-white text-[#222]">拼</span>
      <time className="ml-3.5 flex w-[54px] flex-col text-center text-[11px] leading-[15px]">
        <span>15:27</span>
        <span>2020/6/30</span>
      </time>
      <button aria-label="通知" className="ml-3">
        <Icon size={16}>
          <path d="M1.500 2h13v10H10l-2 2.500L7 12H1.500z" />
        </Icon>
      </button>
      <span className="ml-[17px] h-full w-[3px] border-l border-[#6d7b7d]" />
    </div>
  </div>
);

const SpeedBall = () => (
  <div className="absolute top-[187px] right-[45px] flex items-center text-white">
    <div className="-mr-6 flex h-9 w-[74px] flex-col justify-center gap-1 rounded-l-full bg-[#2d333d] pr-7 pl-2 leading-[14px] shadow">
      <div className="flex items-center">
        <Icon size={8} className="text-[#3fb6e8]">
          <path d="M8 15V2M2 8l6-6 6 6" strokeWidth="3" />
        </Icon>
        <span className="ml-auto whitespace-nowrap">
          <b>0.2</b>
          <span className="text-[8px] text-[#aaa]">K/s</span>
        </span>
      </div>
      <div className="flex items-center">
        <Icon size={8} className="text-[#3bb54a]">
          <path d="M8 1v13M2 8l6 6 6-6" strokeWidth="3" />
        </Icon>
        <span className="ml-auto whitespace-nowrap">
          <b>0</b>
          <span className="text-[8px] text-[#aaa]">K/s</span>
        </span>
      </div>
    </div>
    <div className="relative flex h-[50px] w-[50px] items-center justify-center rounded-full border border-[#6a707c] bg-[#474d59] shadow">
      <svg className="absolute inset-0" width="48" height="48" viewBox="0 0 48 48" aria-hidden="true">
        <defs>
          <linearGradient id="ball" x1="0" y1="0" x2="0" y2="1">
            <stop offset="0" stopColor="#45c3c4" />
            <stop offset="0.6" stopColor="#5fb08a" />
            <stop offset="1" stopColor="#d3cb4f" />
          </linearGradient>
        </defs>
        <path d="M25 3a21 21 0 0 1-6 41.500" fill="none" stroke="url(#ball)" strokeWidth="2" />
      </svg>
      <span className="font-['Lato',sans-serif] text-[20px]">54</span>
      <span className="pt-1.5 text-[8px]">%</span>
    </div>
  </div>
);

const Pointer = () => (
  <svg className="absolute top-[389px] left-[389px]" width="12" height="16" viewBox="0 0 12 16" aria-hidden="true">
    <path d="M2 1v12l3-3 2 5 2-1-2-4.500h4z" fill="#fff" stroke="#333" />
  </svg>
);

const App = () => {
  return (
    <div
      lang="zh-CN"
      className="relative flex min-h-screen flex-col overflow-x-hidden bg-[#f4f4f4] font-['Open_Sans','Noto_Sans_CJK_SC',sans-serif] text-[10px]"
    >
      <TitleBar />
      <MenuBar />
      <Ribbon />
      <Workspace />
      <StatusBar />
      <TaskBar />
      <SpeedBall />
      <Pointer />
    </div>
  );
};

export default App;
